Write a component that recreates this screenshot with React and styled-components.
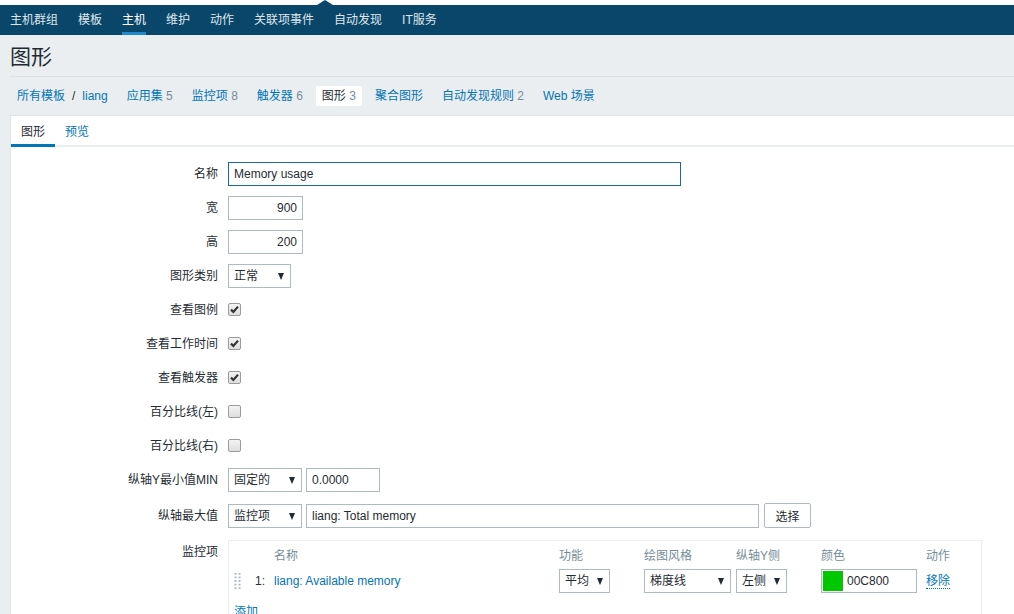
import React from 'react';
import styled, { createGlobalStyle } from 'styled-components';

const GlobalStyle = createGlobalStyle`
  html, body {
    margin: 0;
    padding: 0;
  }
  body {
    background: #ebeef0;
    font-family: "Liberation Sans", "Noto Sans CJK SC", Arial, sans-serif;
    font-size: 12px;
    color: #1f2c33;
    overflow: hidden;
  }
  * {
    box-sizing: border-box;
  }
`;

const Page = styled.div`
  height: 614px;
  overflow: hidden;
`;

const TopStrip = styled.div`
  height: 5px;
  background: #fff;
`;

const Nav = styled.nav`
  position: relative;
  display: flex;
  height: 30px;
  background: #0a466a;

  &::before {
    content: '';
    position: absolute;
    left: 317px;
    top: -5px;
    border-left: 8px solid transparent;
    border-right: 8px solid transparent;
    border-bottom: 5px solid #0a466a;
  }
`;

const NavItem = styled.a`
  position: relative;
  display: flex;
  align-items: center;
  padding: 0 10px;
  color: ${(p) => (p.$active ? '#ffffff' : '#dfe7ec')};
  text-decoration: none;
  line-height: 14px;

  &::after {
    content: '';
    display: ${(p) => (p.$active ? 'block' : 'none')};
    position: absolute;
    left: 10px;
    right: 10px;
    bottom: 0;
    height: 3px;
    background: #1e87cd;
  }
`;

const Header = styled.header`
  height: 42px;
  margin-left: 10px;
  padding-top: 10px;
  border-bottom: 1px solid #dde1e4;
`;

const Title = styled.h1`
  margin: 0;
  font-size: 21px;
  font-weight: normal;
  line-height: 24px;
  color: #1f2c33;
`;

const Crumbs = styled.div`
  display: flex;
  gap: 7px;
  padding: 9px 0 0 11px;
`;

const Crumb = styled.a`
  display: block;
  height: 20px;
  padding: 0 6px;
  line-height: 20px;
  color: ${(p) => (p.$selected ? '#1f2c33' : '#0275b8')};
  background: ${(p) => (p.$selected ? '#ffffff' : 'transparent')};
  text-decoration: none;
  white-space: nowrap;
`;

const Count = styled.span`
  color: #768d99;
`;

const Sep = styled.span`
  margin: 0 7px 0 7px;
  color: #1f2c33;
`;

const Panel = styled.section`
  margin: 9px 0 0 10px;
  background: #fff;
  border-top: 1px solid #dfe4e7;
  border-left: 1px solid #dfe4e7;
  height: 600px;
`;

const TabBar = styled.div`
  display: flex;
  height: 31px;
  border-bottom: 2px solid #ebeef0;
`;

const Tab = styled.a`
  display: flex;
  align-items: center;
  height: 31px;
  margin-bottom: -2px;
  padding: 0 10px;
  border-bottom: 3px solid ${(p) => (p.$active ? '#0275b8' : 'transparent')};
  color: ${(p) => (p.$active ? '#1f2c33' : '#0275b8')};
  text-decoration: none;
`;

const Form = styled.div`
  display: flex;
  flex-direction: column;
  gap: 10px;
  padding-top: 15px;
`;

const Row = styled.div`
  display: grid;
  grid-template-columns: 207px 1fr;
  column-gap: 10px;
  align-items: ${(p) => (p.$top ? 'start' : 'center')};
  min-height: 24px;
  margin-top: ${(p) => p.$shift || 0}px;
`;

const Label = styled.label`
  text-align: right;
  line-height: 14px;
  padding-top: ${(p) => (p.$top ? '5px' : '0')};
  white-space: nowrap;
`;

const Field = styled.div`
  display: flex;
  align-items: center;
  gap: 4px;
`;

const TextInput = styled.input`
  width: ${(p) => p.$w}px;
  height: 24px;
  padding: 0 5px;
  border: 1px solid ${(p) => (p.$focus ? '#1f65a0' : '#acbbc2')};
  background: #fff;
  font: inherit;
  color: #1f2c33;
  text-align: ${(p) => (p.$right ? 'right' : 'left')};
  outline: none;
`;

const Select = styled.div`
  position: relative;
  width: ${(p) => p.$w}px;
  height: 24px;
  padding-left: 5px;
  border: 1px solid #acbbc2;
  background: #fff;
  line-height: 22px;
  white-space: nowrap;

  &::after {
    content: '';
    position: absolute;
    right: 6px;
    top: 8px;
    border-left: 3.5px solid transparent;
    border-right: 3.5px solid transparent;
    border-top: 7px solid #1f2c33;
  }
`;

const Button = styled.button`
  width: 47px;
  height: 25px;
  margin-left: 1px;
  padding: 0;
  border: 1px solid #acbbc2;
  border-radius: 2px;
  background: #fff;
  font: inherit;
  color: #1f2c33;
`;

const CheckBox = styled.span`
  display: flex;
  align-items: center;
  justify-content: center;
  width: 13px;
  height: 13px;
  margin-top: -2px;
  border: 1px solid #9b9b9b;
  border-radius: 2px;
  background: linear-gradient(#f3f3f3, #dedede);
`;

const Items = styled.div`
  width: 754px;
  height: 80px;
  padding: 4px 5px 0;
  border: 1px solid #ebeef0;
`;

const ItemGrid = styled.div`
  display: grid;
  grid-template-columns: 20px 20px 285px 85px 92px 85px 105px auto;
  align-items: center;
  height: ${(p) => p.$h}px;
  margin-bottom: ${(p) => p.$mb || 0}px;
  color: ${(p) => (p.$head ? '#768d99' : '#1f2c33')};
`;

const Handle = styled.span`
  display: block;
  width: 7px;
  height: 18px;
  background-image: radial-gradient(circle, #acbbc2 1px, transparent 1.2px);
  background-size: 4px 3.6px;
  background-position: -0.5px 0;
`;

const Num = styled.span`
  padding-left: 1px;
`;

const Link = styled.a`
  color: #0275b8;
  text-decoration: none;
  border-bottom: ${(p) => (p.$dotted ? '1px dotted #0275b8' : 'none')};
  line-height: 14px;
`;

const ColorInput = styled.div`
  display: flex;
  align-items: center;
  gap: 4px;
  width: 96px;
  height: 24px;
  padding: 1px;
  border: 1px solid #acbbc2;
`;

const Swatch = styled.span`
  width: 20px;
  height: 20px;
  background: ${(p) => p.$color};
`;

const AddLink = styled(Link)`
  display: inline-block;
  line-height: 14px;
`;

const Check = () => (
  <svg width="9" height="9" viewBox="0 0 9 9">
    <path d="M1 4.6 L3.4 7 L8 1.6" fill="none" stroke="#333" strokeWidth="2.2" />
  </svg>
);

const navItems = ['主机群组', '模板', '主机', '维护', '动作', '关联项事件', '自动发现', 'IT服务'];

const crumbs = [
  { label: '应用集', count: 5 },
  { label: '监控项', count: 8 },
  { label: '触发器', count: 6 },
  { label: '图形', count: 3, selected: true },
  { label: '聚合图形' },
  { label: '自动发现规则', count: 2 },
  { label: 'Web 场景' },
];

const checks = [
  ['查看图例', true],
  ['查看工作时间', true],
  ['查看触发器', true],
  ['百分比线(左)', false],
  ['百分比线(右)', false],
];

export default function App() {
  return (
    <Page>
      <GlobalStyle />
      <TopStrip />
      <Nav>
        {navItems.map((item) => (
          <NavItem key={item} $active={item === '主机'}>
            {item}
          </NavItem>
        ))}
      </Nav>
      <Header>
        <Title>图形</Title>
      </Header>
      <Crumbs>
        <Crumb>
          所有模板<Sep>/</Sep>liang
        </Crumb>
        {crumbs.map((c) => (
          <Crumb key={c.label} $selected={c.selected}>
            {c.label}
            {c.count !== undefined && <Count> {c.count}</Count>}
          </Crumb>
        ))}
      </Crumbs>
      <Panel>
        <TabBar>
          <Tab $active>图形</Tab>
          <Tab>预览</Tab>
        </TabBar>
        <Form>
          <Row>
            <Label>名称</Label>
            <Field>
              <TextInput $w={453} $focus readOnly value="Memory usage" />
            </Field>
          </Row>
          <Row>
            <Label>宽</Label>
            <Field>
              <TextInput $w={75} $right readOnly value="900" />
            </Field>
          </Row>
          <Row>
            <Label>高</Label>
            <Field>
              <TextInput $w={75} $right readOnly value="200" />
            </Field>
          </Row>
          <Row>
            <Label>图形类别</Label>
            <Field>
              <Select $w={63}>正常</Select>
            </Field>
          </Row>
          {checks.map(([label, on]) => (
            <Row key={label}>
              <Label>{label}</Label>
              <Field>
                <CheckBox>{on && <Check />}</CheckBox>
              </Field>
            </Row>
          ))}
          <Row>
            <Label>纵轴Y最小值MIN</Label>
            <Field>
              <Select $w={74}>固定的</Select>
              <TextInput $w={74} readOnly value="0.0000" />
            </Field>
          </Row>
          <Row $shift={1}>
            <Label>纵轴最大值</Label>
            <Field>
              <Select $w={74}>监控项</Select>
              <TextInput $w={453} readOnly value="liang: Total memory" />
              <Button>选择</Button>
            </Field>
          </Row>
          <Row $top $shift={2}>
            <Label $top>监控项</Label>
            <Items>
              <ItemGrid $head $h={18} $mb={6}>
                <span />
                <span />
                <span>名称</span>
                <span>功能</span>
                <span>绘图风格</span>
                <span>纵轴Y侧</span>
                <span>颜色</span>
                <span>动作</span>
              </ItemGrid>
              <ItemGrid $h={24} $mb={12}>
                <Handle />
                <Num>1:</Num>
                <span>
                  <Link>liang: Available memory</Link>
                </span>
                <Select $w={51}>平均</Select>
                <Select $w={87}>梯度线</Select>
                <Select $w={51}>左侧</Select>
                <ColorInput>
                  <Swatch $color="#00c800" />
                  00C800
                </ColorInput>
                <span>
                  <Link $dotted>移除</Link>
                </span>
              </ItemGrid>
              <AddLink>添加</AddLink>
            </Items>
          </Row>
        </Form>
      </Panel>
    </Page>
  );
}
